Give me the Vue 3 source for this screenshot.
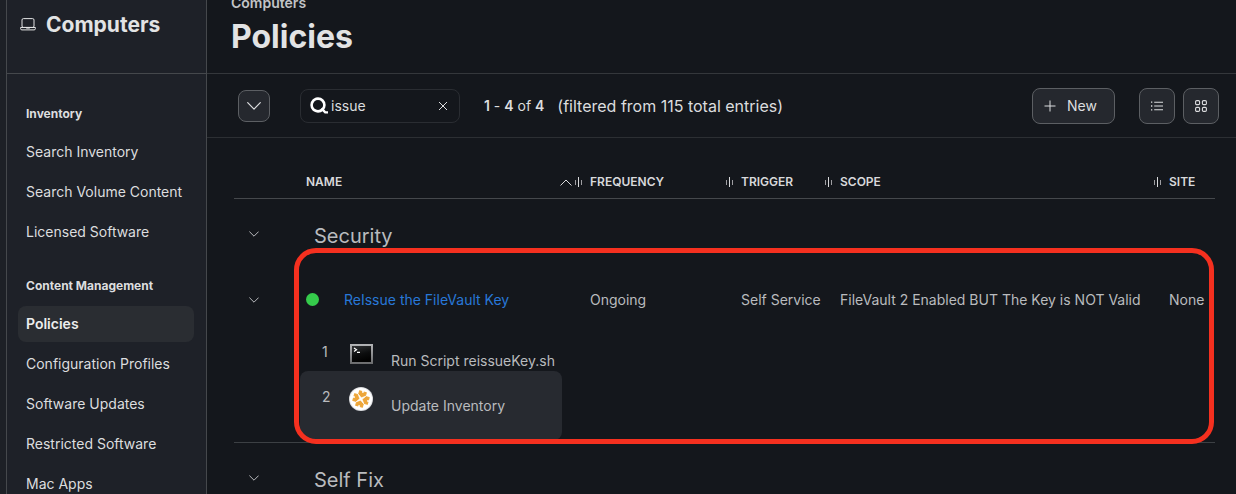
<script setup>
import { ref } from 'vue'

const query = ref('issue')

const sections = [
  { title: 'Inventory', items: ['Search Inventory', 'Search Volume Content', 'Licensed Software'] },
  {
    title: 'Content Management',
    items: ['Policies', 'Configuration Profiles', 'Software Updates', 'Restricted Software', 'Mac Apps'],
  },
]
const active = 'Policies'

const columns = [
  { key: 'name', label: 'Name', sorted: true, resizable: true },
  { key: 'frequency', label: 'Frequency', resizable: true },
  { key: 'trigger', label: 'Trigger', resizable: true },
  { key: 'scope', label: 'Scope', resizable: true },
  { key: 'site', label: 'Site' },
]

const groups = [
  {
    name: 'Security',
    policies: [
      {
        name: 'ReIssue the FileVault Key',
        frequency: 'Ongoing',
        trigger: 'Self Service',
        scope: 'FileVault 2 Enabled BUT The Key is NOT Valid',
        site: 'None',
        steps: [
          { kind: 'script', label: 'Run Script reissueKey.sh' },
          { kind: 'inventory', label: 'Update Inventory' },
        ],
      },
    ],
  },
  { name: 'Self Fix', policies: [] },
]
</script>

<template>
  <div class="page">
    <aside class="sidebar">
      <div class="sidebar-head">
        <svg class="laptop" width="16" height="13" viewBox="0 0 16 13" fill="none" stroke="currentColor">
          <rect x="2" y="0.6" width="12" height="8.8" rx="1.4" />
          <path d="M0.6 9.5H15.4V10.6Q15.4 11.9 14.1 11.9H1.9Q0.6 11.9 0.6 10.6Z" />
          <path d="M6.2 9.9H9.8" stroke-width="1.4" />
        </svg>
        <span>Computers</span>
      </div>
      <nav>
        <section v-for="s in sections" :key="s.title">
          <h2>{{ s.title }}</h2>
          <a v-for="i in s.items" :key="i" href="#" :class="{ active: i === active }">{{ i }}</a>
        </section>
      </nav>
    </aside>

    <main>
      <header>
        <p>Computers</p>
        <h1>Policies</h1>
      </header>

      <div class="toolbar">
        <button class="btn small" aria-label="Expand filters">
          <svg width="14" height="8" viewBox="0 0 14 8" fill="none" stroke="currentColor" stroke-width="1.2" stroke-linecap="round" stroke-linejoin="round">
            <path d="M0.7 0.7L7 7.2L13.3 0.7" />
          </svg>
        </button>
        <div class="search">
          <svg width="19" height="18" viewBox="0 0 19 18" fill="none" stroke="#fff" stroke-width="2.6">
            <circle cx="8" cy="8" r="6.4" />
            <path d="M11.4 11.4L15.2 15.4H18" stroke-width="2.4" />
          </svg>
          <input v-model="query" type="text" aria-label="Filter policies" />
          <button class="clear" aria-label="Clear" @click="query = ''">
            <svg width="10" height="10" viewBox="0 0 10 10" fill="none" stroke="currentColor">
              <path d="M1 1L9 9M9 1L1 9" />
            </svg>
          </button>
        </div>
        <span class="range"><b>1</b> - <b>4</b> of <b>4</b></span>
        <span class="filtered">(filtered from 115 total entries)</span>
        <button class="btn new">
          <svg width="12" height="12" viewBox="0 0 12 12" fill="none" stroke="currentColor">
            <path d="M6 0.5V11.5M0.5 6H11.5" />
          </svg>
          New
        </button>
        <div class="views">
          <button class="btn" aria-label="List view">
            <svg width="12" height="10" viewBox="0 0 12 10" fill="none" stroke="currentColor">
              <path d="M3.2 1.2H12M3.2 5H12M3.2 8.8H12" stroke-width="1.1" />
              <path d="M0 1.2H1.3M0 5H1.3M0 8.8H1.3" stroke-width="1.3" />
            </svg>
          </button>
          <button class="btn" aria-label="Grid view">
            <svg width="12" height="12" viewBox="0 0 12 12" fill="none" stroke="currentColor" stroke-width="1.1">
              <rect x="0.6" y="0.6" width="4" height="4" rx="1.2" />
              <rect x="7.4" y="0.6" width="4" height="4" rx="1.2" />
              <rect x="0.6" y="7.4" width="4" height="4" rx="1.2" />
              <rect x="7.4" y="7.4" width="4" height="4" rx="1.2" />
            </svg>
          </button>
        </div>
      </div>

      <div class="table-wrap">
        <table>
          <colgroup>
            <col class="c-toggle" />
            <col v-for="c in columns" :key="c.key" :class="'c-' + c.key" />
          </colgroup>
          <thead>
            <tr>
              <th></th>
              <th v-for="c in columns" :key="c.key" scope="col">
                <div class="th">
                  <span>{{ c.label }}</span>
                  <svg v-if="c.sorted" class="sort" width="12" height="7" viewBox="0 0 12 7" fill="none" stroke="currentColor">
                    <path d="M0.5 6.5L6 1L11.5 6.5" />
                  </svg>
                  <svg v-if="c.resizable" width="7" height="10" viewBox="0 0 7 10" fill="none" stroke="currentColor">
                    <path d="M0.5 3V8M6.5 3V8" opacity="0.7" />
                    <path d="M3.5 0V10" />
                  </svg>
                </div>
              </th>
            </tr>
          </thead>
          <tbody v-for="g in groups" :key="g.name">
            <tr class="group">
              <td class="toggle">
                <button :aria-label="'Toggle ' + g.name">
                  <svg width="10" height="6" viewBox="0 0 10 6" fill="none" stroke="currentColor">
                    <path d="M0.4 0.6L5 5.2L9.6 0.6" />
                  </svg>
                </button>
              </td>
              <td colspan="5">{{ g.name }}</td>
            </tr>
            <template v-for="p in g.policies" :key="p.name">
              <tr class="policy">
                <td class="toggle">
                  <button :aria-label="'Toggle ' + p.name">
                    <svg width="10" height="6" viewBox="0 0 10 6" fill="none" stroke="currentColor">
                      <path d="M0.4 0.6L5 5.2L9.6 0.6" />
                    </svg>
                  </button>
                </td>
                <td>
                  <div class="name"><i class="dot"></i><a href="#">{{ p.name }}</a></div>
                </td>
                <td>{{ p.frequency }}</td>
                <td>{{ p.trigger }}</td>
                <td>{{ p.scope }}</td>
                <td>{{ p.site }}</td>
              </tr>
              <tr class="steps">
                <td></td>
                <td colspan="5">
                  <ol>
                    <li v-for="(s, n) in p.steps" :key="s.label" :class="{ hover: s.kind === 'inventory' }">
                      <span class="num">{{ n + 1 }}</span>
                      <svg v-if="s.kind === 'script'" width="24" height="24" viewBox="0 0 24 24">
                        <defs>
                          <linearGradient id="frame" x1="0" y1="0" x2="0" y2="1">
                            <stop offset="0" stop-color="#b4b5b7" />
                            <stop offset="1" stop-color="#6a6b6d" />
                          </linearGradient>
                          <linearGradient id="screen" x1="0" y1="0" x2="0.3" y2="1">
                            <stop offset="0" stop-color="#303234" />
                            <stop offset="0.6" stop-color="#0c0d0e" />
                            <stop offset="1" stop-color="#020202" />
                          </linearGradient>
                        </defs>
                        <rect x="1" y="2" width="23" height="20" fill="url(#frame)" />
                        <rect x="3" y="4" width="19" height="16" fill="url(#screen)" />
                        <path d="M5 6L7.5 7.7L5 9.4M8 10.3H11" fill="none" stroke="#fff" stroke-width="1.2" />
                      </svg>
                      <svg v-else width="24" height="24" viewBox="0 0 24 24">
                        <circle cx="12" cy="12" r="12" fill="#dcdde0" />
                        <circle cx="12" cy="12" r="11" fill="#fff" />
                        <g transform="rotate(15 12 12)">
                          <path d="M8.5 4.5H15.5V8.5H19.5V15.5H15.5V19.5H8.5V15.5H4.5V8.5H8.5Z" fill="#eda63a" stroke="#eda63a" stroke-linejoin="round" />
                          <path d="M12 3.4V5.6M12 18.4V20.6M3.4 12H5.6M18.4 12H20.6" stroke="#fff" stroke-width="1.6" />
                          <path d="M8 8L12 10.8L16 8L13.2 12L16 16L12 13.2L8 16L10.8 12Z" fill="#fff" stroke="#fff" stroke-width="0.6" />
                        </g>
                      </svg>
                      <span class="label">{{ s.label }}</span>
                    </li>
                  </ol>
                </td>
              </tr>
            </template>
          </tbody>
        </table>
        <div class="highlight"></div>
      </div>
    </main>
  </div>
</template>

<style>
html,
body {
  background: #14171c;
  overflow: hidden;
}
</style>

<style scoped>
* {
  box-sizing: border-box;
}
.page {
  display: grid;
  grid-template-columns: 201px 1fr;
  min-height: 100vh;
  padding-left: 6px;
  background: #1d2026;
  color: #dcdddf;
  font: 14px/20px Inter, "Liberation Sans", sans-serif;
}
h1,
h2,
p,
ol {
  margin: 0;
  padding: 0;
}
svg {
  display: block;
  flex: none;
}
a {
  color: inherit;
  text-decoration: none;
}
button {
  display: flex;
  align-items: center;
  justify-content: center;
  padding: 0;
  border: 0;
  background: none;
  color: inherit;
  font: inherit;
}

.sidebar {
  border: solid #45484c;
  border-width: 0 1px;
  background: #1e2128;
}
.sidebar-head {
  display: flex;
  align-items: center;
  gap: 10px;
  height: 74px;
  padding: 0 13px 24px;
  border-bottom: 1px solid #45484c;
  color: #e2e3e4;
  font-size: 21px;
  font-weight: 700;
}
nav {
  padding: 30px 12px 0 11px;
}
section {
  margin-bottom: 26px;
}
section:last-child {
  margin-bottom: 0;
}
h2 {
  margin-bottom: 10px;
  padding-left: 8px;
  font-size: 12px;
  font-weight: 700;
  line-height: 20px;
}
nav a {
  display: block;
  margin-bottom: 4px;
  padding: 8px;
  border-radius: 8px;
  white-space: nowrap;
}
nav a:last-child {
  margin-bottom: 0;
}
nav a.active {
  background: #2a2d32;
  color: #eceded;
  font-weight: 600;
}

main {
  min-width: 0;
  background: #14171c;
}
header {
  display: flex;
  flex-direction: column;
  justify-content: flex-end;
  gap: 4px;
  height: 74px;
  padding: 0 24px 16px;
  border-bottom: 1px solid #34373b;
}
header p {
  color: #c2c4c6;
  font-weight: 600;
}
h1 {
  color: #e2e3e4;
  font-size: 32px;
  font-weight: 700;
  line-height: 40px;
}

.toolbar {
  display: flex;
  align-items: center;
  height: 64px;
  padding: 0 17px 0 31px;
  border-bottom: 1px solid #2c2f33;
}
.btn {
  width: 36px;
  height: 36px;
  border: 1px solid #5c5f63;
  border-radius: 8px;
  background: #25282e;
}
.btn.small {
  width: 32px;
  height: 32px;
}
.btn.new {
  justify-content: flex-start;
  gap: 11px;
  width: 83px;
  margin-left: auto;
  padding-left: 11px;
}
.search {
  display: flex;
  align-items: center;
  gap: 2px;
  width: 160px;
  height: 34px;
  margin: 0 24px 0 30px;
  padding: 0 11px 0 9px;
  border: 1px solid #2a2d32;
  border-radius: 8px;
}
.search input {
  flex: 1;
  min-width: 0;
  padding: 0;
  border: 0;
  outline: 0;
  background: none;
  color: inherit;
  font: inherit;
}
.range b {
  font-weight: 600;
}
.filtered {
  margin-left: 13px;
  font-size: 16px;
}
.views {
  display: flex;
  gap: 8px;
  margin-left: 24px;
}

.table-wrap {
  position: relative;
  margin: 0 21px 0 27px;
}
table {
  width: 100%;
  border-collapse: separate;
  border-spacing: 0;
  table-layout: fixed;
  color: #b9bbbe;
}
.c-toggle {
  width: 64px;
}
.c-name {
  width: 284px;
}
.c-frequency {
  width: 151px;
}
.c-trigger {
  width: 99px;
}
.c-site {
  width: 54px;
}
th {
  height: 61px;
  padding: 0 0 8px 8px;
  border-bottom: 1px solid #45484c;
  color: #d8d9db;
  font-size: 12px;
  font-weight: 600;
  line-height: 16px;
  text-transform: uppercase;
  vertical-align: bottom;
}
.th {
  display: flex;
  align-items: center;
  gap: 3px;
}
.th span {
  margin-right: auto;
}
td {
  padding: 0 0 0 8px;
  white-space: nowrap;
}
.toggle button {
  width: 24px;
  height: 24px;
}
.group td {
  height: 74px;
  padding-left: 16px;
  font-size: 20px;
}
.group .toggle,
.policy .toggle {
  padding: 0 0 0 8px;
}
.group .toggle {
  padding-bottom: 4px;
}
.policy td {
  height: 53px;
}
.name {
  display: flex;
  align-items: center;
  gap: 25px;
}
.dot {
  width: 13px;
  height: 13px;
  border-radius: 50%;
  background: #35cb4b;
}
.name a {
  color: #2878d8;
}
.steps td {
  height: 117px;
  padding: 0 0 0 2px;
  border-bottom: 1px solid #3c4044;
  vertical-align: top;
}
ol {
  width: 262px;
  list-style: none;
}
li {
  display: flex;
  height: 45px;
  padding: 16px 0 0 22px;
}
li.hover {
  height: 69px;
  border-radius: 8px;
  background: #272a30;
}
.num {
  width: 27px;
}
.label {
  margin-left: 18px;
  line-height: 38px;
}
.highlight {
  position: absolute;
  top: 110px;
  right: 1px;
  left: 60px;
  height: 196px;
  border: 5px solid #f5301f;
  border-radius: 22px;
  pointer-events: none;
}
</style>
